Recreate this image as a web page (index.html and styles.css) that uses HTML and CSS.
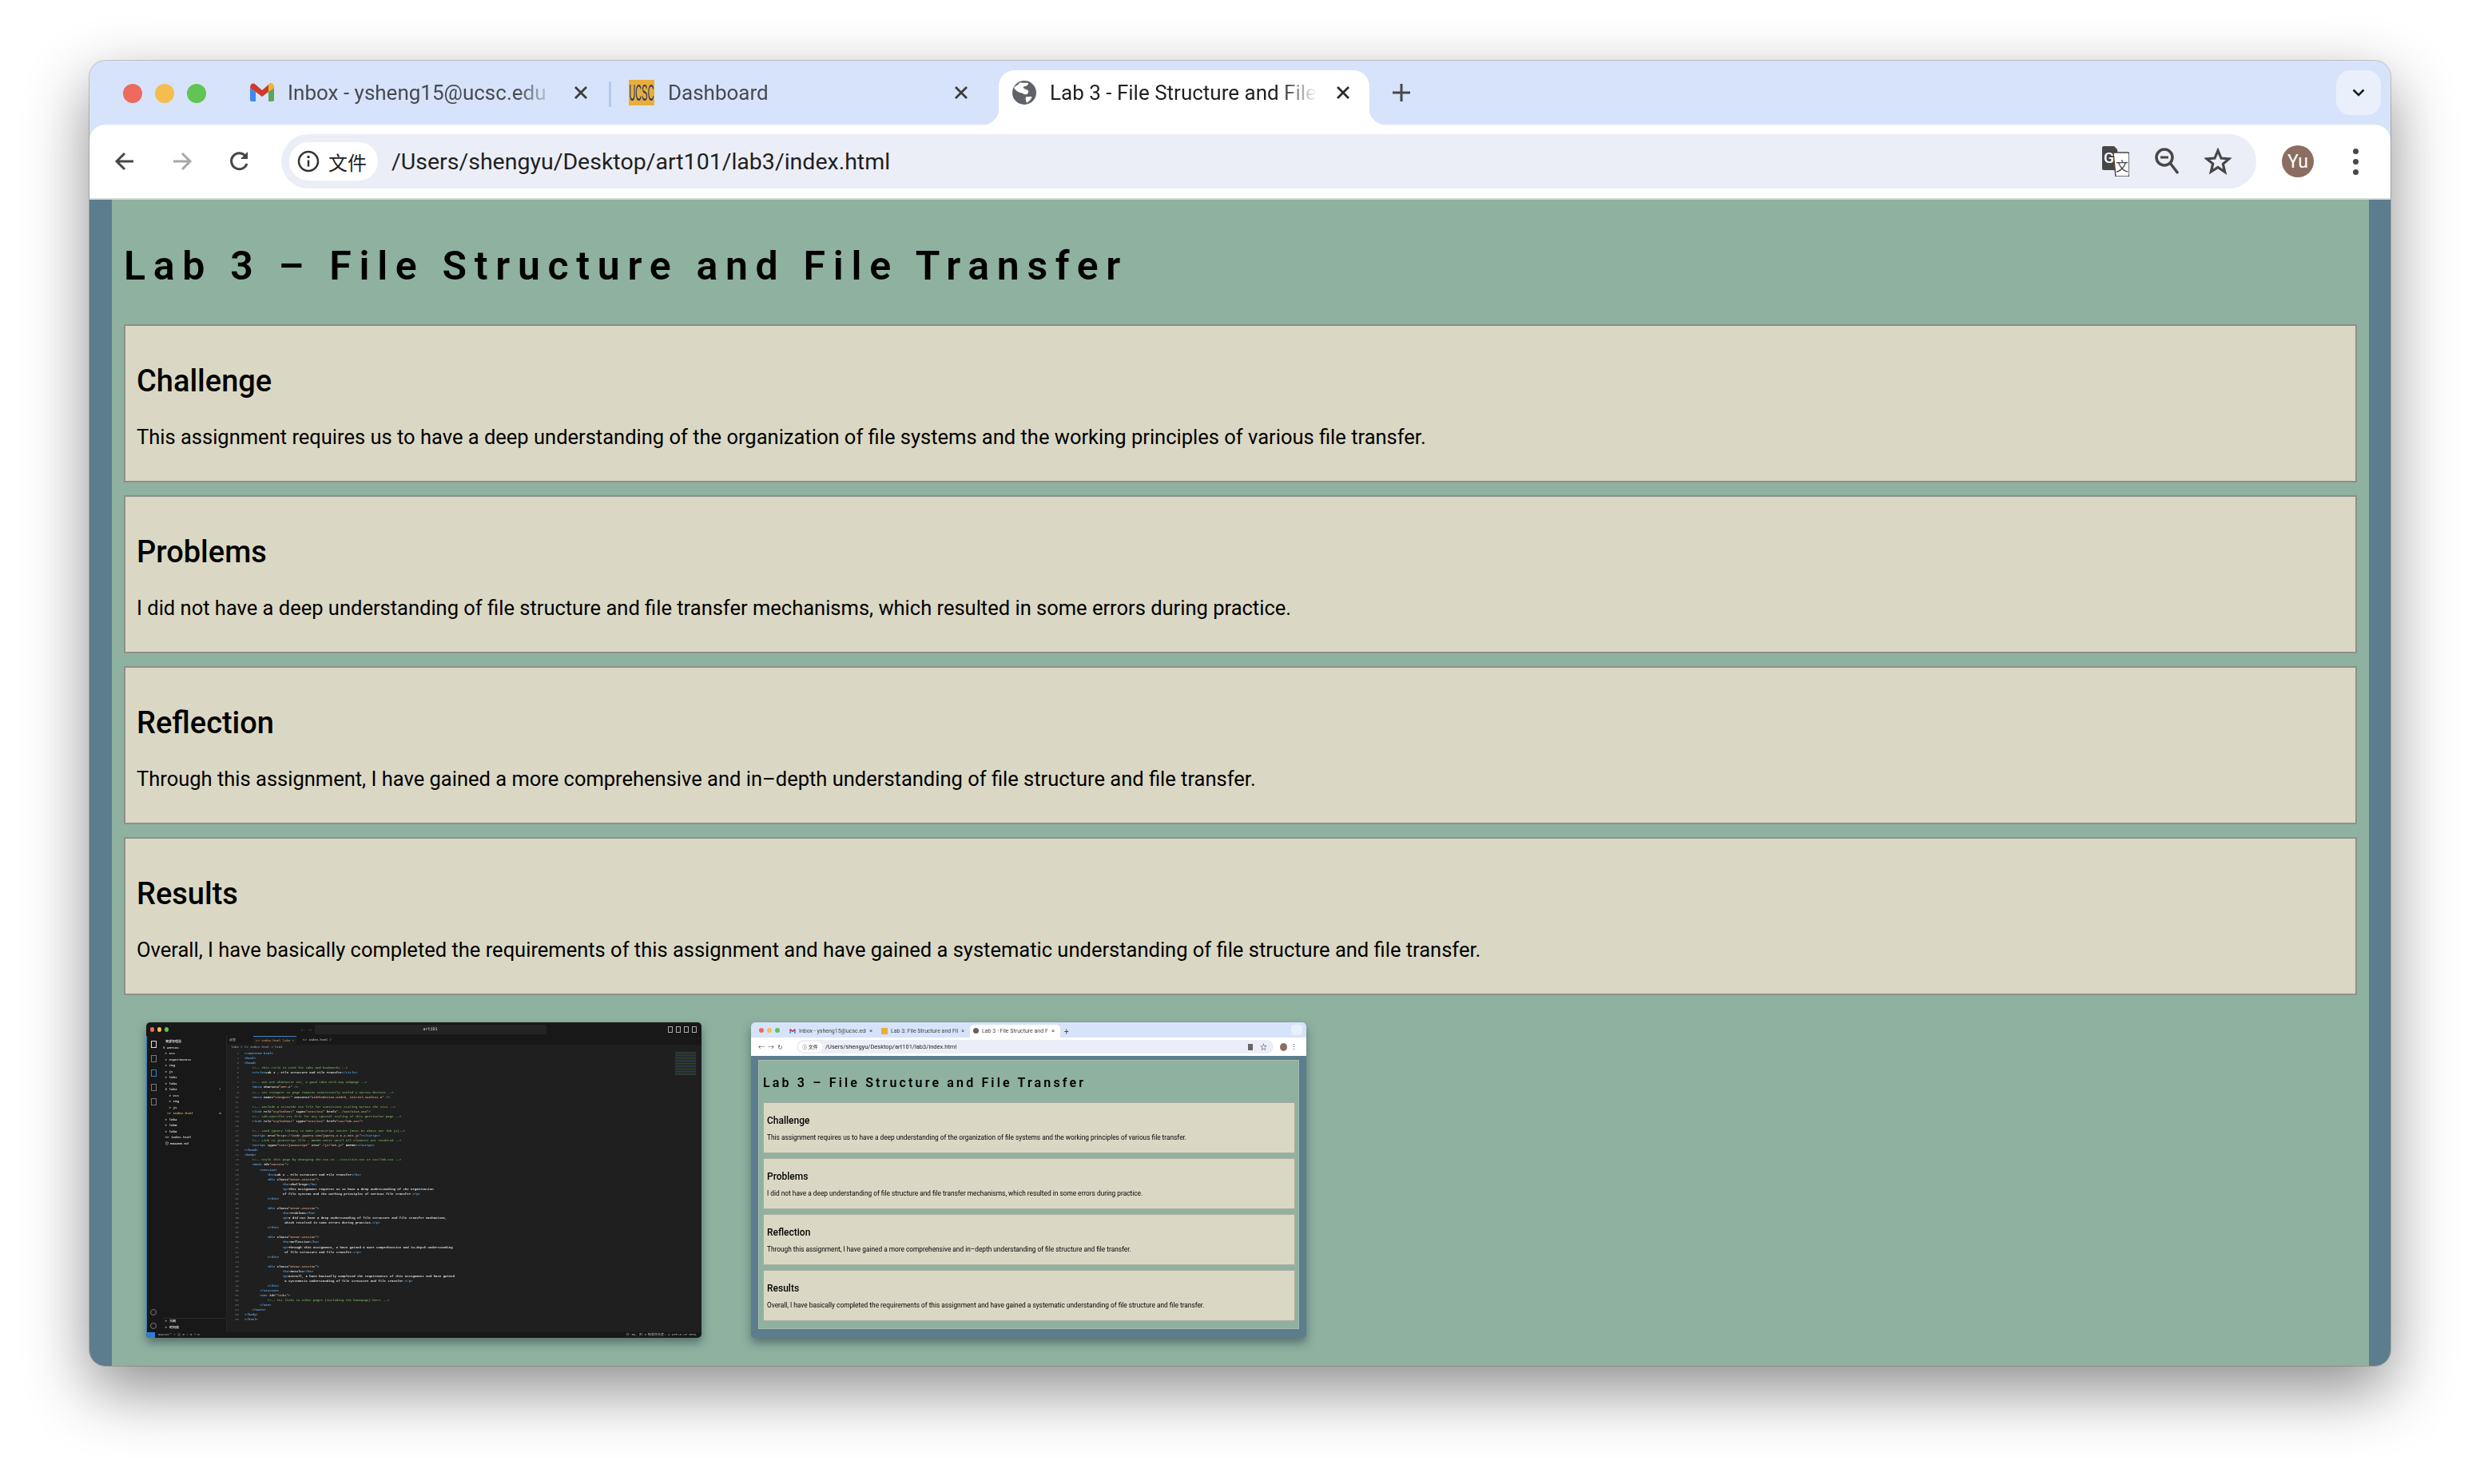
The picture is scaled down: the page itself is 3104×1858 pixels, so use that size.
FILE: index.html
```html
<!DOCTYPE html>
<html lang="en">
<head>
    <meta charset="UTF-8">
    <meta name="viewport" content="width=device-width, initial-scale=1.0">
    <title>Lab 3 - File Structure and File Transfer</title>
    <link rel="stylesheet" href="styles.css">
</head>
<body>

<div class="window">
    <!-- tab strip -->
    <div class="tabstrip">
        <div class="lights">
            <span class="light red"></span>
            <span class="light yellow"></span>
            <span class="light green"></span>
        </div>
        <div class="tab">
            <svg class="favicon gmail" viewBox="0 0 30 24">
                <path d="M0 6v15a2 2 0 0 0 2 2h5V11z" fill="#4285f4"/>
                <path d="M30 6v15a2 2 0 0 1-2 2h-5V11z" fill="#5aa65f"/>
                <path d="M0 6c0-5 4-7 7-4l8 7 8-7c3-3 7-1 7 4l-7 5-8 6-8-6z" fill="#d0392c"/>
                <path d="M23 2c3-3 7-1 7 4l-7 5z" fill="#f1b82d"/>
            </svg>
            <span class="tab-title">Inbox - ysheng15@ucsc.edu</span>
            <svg class="tab-close" viewBox="0 0 18 18"><path d="M2 2l14 14M16 2 2 16" stroke="#3c3c3c" stroke-width="2.800" fill="none"/></svg>
        </div>
        <span class="tab-sep"></span>
        <div class="tab">
            <div class="favicon ucsc"><span>UCSC</span></div>
            <span class="tab-title">Dashboard</span>
            <svg class="tab-close" viewBox="0 0 18 18"><path d="M2 2l14 14M16 2 2 16" stroke="#3c3c3c" stroke-width="2.800" fill="none"/></svg>
        </div>
        <div class="tab active">
            <svg class="favicon" viewBox="0 0 28 28">
                <circle cx="14" cy="14" r="14" fill="#5f6368"/>
                <path d="M9 2c4 1 8 0 10 1-1 3-4 4-6 4-1 2 3 3 5 4 2 2 0 4-1 5-3 1-5-2-8-2-3-1-6-3-7-6 2-2 5-3 7-6zM16 19c2 0 5-1 7 0-1 3-4 6-6 7-1-2-2-5-1-7z" fill="#fff"/>
            </svg>
            <span class="tab-title">Lab 3 - File Structure and File Transfer</span>
            <svg class="tab-close" viewBox="0 0 18 18"><path d="M2 2l14 14M16 2 2 16" stroke="#2a2a2a" stroke-width="2.800" fill="none"/></svg>
        </div>
        <svg class="new-tab" viewBox="0 0 22 22"><path d="M11 0v22M0 11h22" stroke="#474747" stroke-width="3" fill="none"/></svg>
        <div class="tab-search">
            <svg viewBox="0 0 16 10" width="16" height="10"><path d="M1.5 1.5 8 8l6.500-6.500" fill="none" stroke="#1f1f1f" stroke-width="2.500"/></svg>
        </div>
    </div>

    <!-- toolbar -->
    <div class="toolbar">
        <svg class="nav" viewBox="0 0 28 28"><path d="M25 14H5M14 4 4 14l10 10" fill="none" stroke="#474747" stroke-width="3"/></svg>
        <svg class="nav" viewBox="0 0 28 28"><path d="M3 14h20M14 4l10 10-10 10" fill="none" stroke="#a8a8a8" stroke-width="3"/></svg>
        <svg class="nav" viewBox="0 0 28 28"><path d="M23 17a10 10 0 1 1-2-10" fill="none" stroke="#474747" stroke-width="3"/><path d="M24 2v9h-9z" fill="#474747"/></svg>
        <div class="omnibox">
            <div class="chip">
                <svg viewBox="0 0 28 28" width="28" height="28"><circle cx="14" cy="14" r="12" fill="none" stroke="#333" stroke-width="2.500"/><path d="M14 12.500v8" stroke="#333" stroke-width="2.500"/><circle cx="14" cy="8.500" r="1.700" fill="#333"/></svg>
                <span>文件</span>
            </div>
            <span class="url">/Users/shengyu/Desktop/art101/lab3/index.html</span>
            <svg class="omni-icon first" viewBox="0 0 34 38" width="34" height="38">
                <path d="M2 0h13l4 4 3 26H2a2 2 0 0 1-2-2V2a2 2 0 0 1 2-2z" fill="#474747"/>
                <path d="M14 8h18a2 2 0 0 1 2 2v26a2 2 0 0 1-2 2H17z" fill="#fff" stroke="#474747" stroke-width="1.500"/>
                <text x="2" y="21" class="glyph-g">G</text>
                <text x="17" y="31" class="glyph-wen">文</text>
            </svg>
            <svg class="omni-icon" viewBox="0 0 30 34" width="30" height="34">
                <circle cx="12" cy="12" r="10" fill="none" stroke="#474747" stroke-width="3.500"/>
                <path d="M7 12h10" stroke="#474747" stroke-width="3"/>
                <path d="M19 19l10 13" stroke="#474747" stroke-width="3.500"/>
            </svg>
            <svg class="omni-icon" viewBox="0 0 34 34" width="34" height="34">
                <path d="M17 3.500l4 9.500 10 .8-7.700 6.500 2.400 10L17 24.500 8.300 30l2.400-10L3 13.800l10-.8z" fill="none" stroke="#474747" stroke-width="3.200"/>
            </svg>
        </div>
        <div class="avatar">Yu</div>
        <div class="menu-dots"><span></span><span></span><span></span></div>
    </div>

    <!-- page -->
    <main class="page">
        <h1>Lab 3 – File Structure and File Transfer</h1>
        <div class="minor-section">
            <h2>Challenge</h2>
            <p>This assignment requires us to have a deep understanding of the organization of file systems and the working principles of various file transfer.</p>
        </div>
        <div class="minor-section">
            <h2>Problems</h2>
            <p>I did not have a deep understanding of file structure and file transfer mechanisms, which resulted in some errors during practice.</p>
        </div>
        <div class="minor-section">
            <h2>Reflection</h2>
            <p>Through this assignment, I have gained a more comprehensive and in–depth understanding of file structure and file transfer.</p>
        </div>
        <div class="minor-section">
            <h2>Results</h2>
            <p>Overall, I have basically completed the requirements of this assignment and have gained a systematic understanding of file structure and file transfer.</p>
        </div>

        <div class="shots">
            <!-- editor screenshot -->
            <div class="shot editor">
                <div class="ed-title">
                    <div class="ed-lights"><i class="red"></i><i class="yellow"></i><i class="green"></i></div>
                    <span class="ed-arrows">← →</span>
                    <div class="ed-search">art101</div>
                    <div class="ed-panels"><i></i><i></i><i></i><i></i></div>
                </div>
                <div class="ed-body">
                    <div class="ed-activity">
                        <i class="on"></i><i></i><i class="badge"></i><i></i><i></i>
                        <span class="ed-spacer"></span>
                        <i class="round"></i><i class="round"></i>
                    </div>
                    <div class="ed-side">
                        <div class="ed-side-top">
<pre> 资源管理器
∨ ART101
 &gt; css
 &gt; experiments
 &gt; img
 &gt; js
 &gt; lab1
 &gt; lab2
 ∨ lab3                     •
   &gt; css
   &gt; img
   &gt; js
  <b>&lt;&gt; index.html             M</b>
 &gt; lab4
 &gt; lab5
 &gt; lab6
 &lt;&gt; index.html
 ⓘ README.md</pre>
                        </div>
                        <div class="ed-side-bottom">
<pre> &gt; 大纲
 &gt; 时间线</pre>
                        </div>
                    </div>
                    <div class="ed-main">
                        <div class="ed-tabs">
                            <span>欢迎</span>
                            <span class="on">&lt;&gt; index.html  lab3 ×</span>
                            <span>&lt;&gt; index.html  /</span>
                        </div>
                        <div class="ed-crumbs">lab3 &gt; &lt;&gt; index.html &gt; html</div>
                        <div class="ed-code">
<pre class="ed-nums">1
2
3
4
5
6
7
8
9
10
11
12
13
14
15
16
17
18
19
20
21
22
23
24
25
26
27
28
29
30
31
32
33
34
35
36
37
38
39
40
41
42
43
44
45
46
47
48
49
50
51
52
53
54
55
56</pre>
<pre class="ed-src"><u>&lt;!DOCTYPE html&gt;</u>
<u>&lt;html&gt;</u>
<u>&lt;head&gt;</u>
    <s>&lt;!-- This title is used for tabs and bookmarks --&gt;</s>
    <u>&lt;title&gt;</u>Lab 3 - File Structure and File Transfer<u>&lt;/title&gt;</u>

    <s>&lt;!-- Use UTF character set, a good idea with any webpage --&gt;</s>
    <u>&lt;meta</u> charset=<q>"UTF-8"</q> <u>/&gt;</u>
    <s>&lt;!-- Set viewport so page remains consistently scaled w narrow devices --&gt;</s>
    <u>&lt;meta</u> name=<q>"viewport"</q> content=<q>"width=device-width, initial-scale=1.0"</q> <u>/&gt;</u>

    <s>&lt;!-- Include a sitewide CSS file for consistent styling across the site --&gt;</s>
    <u>&lt;link</u> rel=<q>"stylesheet"</q> type=<q>"text/css"</q> href=<q>"../css/site.css"</q><u>&gt;</u>
    <s>&lt;!-- Lab-specific CSS file for any special styling of this particular page --&gt;</s>
    <u>&lt;link</u> rel=<q>"stylesheet"</q> type=<q>"text/css"</q> href=<q>"css/lab.css"</q><u>&gt;</u>

    <s>&lt;!-- Load jQuery library to make javascript easier (must be above our lab js)--&gt;</s>
    <u>&lt;script</u> src=<q>"https://code.jquery.com/jquery-3.6.4.min.js"</q><u>&gt;&lt;/script&gt;</u>
    <s>&lt;!-- Link to javascript file - DEFER waits until all elements are rendered --&gt;</s>
    <u>&lt;script</u> type=<q>"text/javascript"</q> src=<q>"./js/lab.js"</q> DEFER<u>&gt;&lt;/script&gt;</u>
<u>&lt;/head&gt;</u>
<u>&lt;body&gt;</u>
    <s>&lt;!-- Style this page by changing the CSS in ../css/site.css or css/lab.css --&gt;</s>
    <u>&lt;main</u> id=<q>"content"</q><u>&gt;</u>
        <u>&lt;section&gt;</u>
            <u>&lt;h1&gt;</u>Lab 3 - File Structure and File Transfer<u>&lt;/h1&gt;</u>
            <u>&lt;div</u> class=<q>"minor-section"</q><u>&gt;</u>
                    <u>&lt;h2&gt;</u>Challenge<u>&lt;/h2&gt;</u>
                    <u>&lt;p&gt;</u>This assignment requires us to have a deep understanding of the organization
                    of file systems and the working principles of various file transfer.<u>&lt;/p&gt;</u>
            <u>&lt;/div&gt;</u>

            <u>&lt;div</u> class=<q>"minor-section"</q><u>&gt;</u>
                    <u>&lt;h2&gt;</u>Problems<u>&lt;/h2&gt;</u>
                    <u>&lt;p&gt;</u>I did not have a deep understanding of file structure and file transfer mechanisms,
                     which resulted in some errors during practice.<u>&lt;/p&gt;</u>
            <u>&lt;/div&gt;</u>

            <u>&lt;div</u> class=<q>"minor-section"</q><u>&gt;</u>
                    <u>&lt;h2&gt;</u>Reflection<u>&lt;/h2&gt;</u>
                    <u>&lt;p&gt;</u>Through this assignment, I have gained a more comprehensive and in-depth understanding
                     of file structure and file transfer.<u>&lt;/p&gt;</u>
            <u>&lt;/div&gt;</u>

            <u>&lt;div</u> class=<q>"minor-section"</q><u>&gt;</u>
                    <u>&lt;h2&gt;</u>Results<u>&lt;/h2&gt;</u>
                    <u>&lt;p&gt;</u>Overall, I have basically completed the requirements of this assignment and have gained
                     a systematic understanding of file structure and file transfer.<u>&lt;/p&gt;</u>
            <u>&lt;/div&gt;</u>
        <u>&lt;/section&gt;</u>
        <u>&lt;nav</u> id=<q>"links"</q><u>&gt;</u>
            <s>&lt;!-- Put links to other pages (including the homepage) here. --&gt;</s>
        <u>&lt;/nav&gt;</u>
    <u>&lt;/main&gt;</u>
<u>&lt;/body&gt;</u>
<u>&lt;/html&gt;</u></pre>
                            <div class="ed-minimap"></div>
                        </div>
                    </div>
                </div>
                <div class="ed-status">
                    <b></b>
                    <span>master*  ○  ⓧ 0 ⚠ 0   ⑂ 0</span>
                    <span class="ed-status-right">行 56, 列 8  制表符长度: 4  UTF-8  LF  HTML</span>
                </div>
            </div>

            <!-- browser screenshot -->
            <div class="shot mini">
                <div class="mini-tabs">
                    <div class="mini-lights"><i class="red"></i><i class="yellow"></i><i class="green"></i></div>
                    <div class="mini-tab">
                        <svg class="mini-fav" viewBox="0 0 30 24"><path d="M0 6v17h7V11zM30 6v17h-7V11z" fill="#4285f4"/><path d="M0 6c0-5 4-7 7-4l8 7 8-7c3-3 7-1 7 4l-15 11z" fill="#d0392c"/></svg>
                        <span>Inbox - ysheng15@ucsc.edu</span><em>×</em>
                    </div>
                    <div class="mini-tab">
                        <b class="mini-ucsc"></b>
                        <span>Lab 3: File Structure and File</span><em>×</em>
                    </div>
                    <div class="mini-tab on">
                        <b class="mini-globe"></b>
                        <span>Lab 3 - File Structure and File</span><em>×</em>
                    </div>
                    <em class="mini-plus">+</em>
                    <b class="mini-chevron"></b>
                </div>
                <div class="mini-bar">
                    <span class="mini-nav">← &nbsp;→ &nbsp;↻</span>
                    <div class="mini-omni">
                        <span class="mini-chip">ⓘ 文件</span>
                        <span class="mini-url">/Users/shengyu/Desktop/art101/lab3/index.html</span>
                        <b class="mini-tool"></b>
                        <span class="mini-star">☆</span>
                    </div>
                    <span class="mini-avatar"></span>
                    <span class="mini-dots">⋮</span>
                </div>
                <div class="mini-page">
                    <div class="mini-inner">
                        <div class="mini-h1">Lab 3 – File Structure and File Transfer</div>
                        <div class="mini-card">
                            <div class="mini-h2">Challenge</div>
                            <div class="mini-p">This assignment requires us to have a deep understanding of the organization of file systems and the working principles of various file transfer.</div>
                        </div>
                        <div class="mini-card">
                            <div class="mini-h2">Problems</div>
                            <div class="mini-p">I did not have a deep understanding of file structure and file transfer mechanisms, which resulted in some errors during practice.</div>
                        </div>
                        <div class="mini-card">
                            <div class="mini-h2">Reflection</div>
                            <div class="mini-p">Through this assignment, I have gained a more comprehensive and in–depth understanding of file structure and file transfer.</div>
                        </div>
                        <div class="mini-card">
                            <div class="mini-h2">Results</div>
                            <div class="mini-p">Overall, I have basically completed the requirements of this assignment and have gained a systematic understanding of file structure and file transfer.</div>
                        </div>
                    </div>
                </div>
            </div>
        </div>
    </main>
</div>

</body>
</html>
```

FILE: styles.css
```css
body {
    margin: 0;
    height: 1858px;
    padding: 76px 112px 0;
    box-sizing: border-box;
    overflow: hidden;
    background: #fff;
    font-family: Roboto, "Noto Sans CJK SC", sans-serif;
}

/* window */
.window {
    height: 1634px;
    border-radius: 20px;
    overflow: hidden;
    background: #d6e3fa;
    display: flex;
    flex-direction: column;
    box-shadow: 0 0 0 1px rgba(0, 0, 0, 0.18), 0 30px 80px rgba(0, 0, 0, 0.45);
}
.tabstrip {
    height: 80px;
    flex: none;
    display: flex;
    align-items: flex-end;
}
.lights {
    width: 184px;
    box-sizing: border-box;
    height: 68px;
    padding: 17px 0 0 42px;
    display: flex;
    gap: 16px;
}
.light {
    width: 24px;
    height: 24px;
    border-radius: 50%;
}
.red { background: #ee6a5f; }
.yellow { background: #f5bd4f; }
.green { background: #61c454; }

.tab {
    width: 464px;
    height: 68px;
    box-sizing: border-box;
    padding: 0 0 12px 17px;
    display: flex;
    align-items: center;
    position: relative;
    border-radius: 20px 20px 0 0;
}
.tab.active {
    background: #fff;
    margin-left: 16px;
}
.tab.active::before,
.tab.active::after {
    content: "";
    position: absolute;
    bottom: 0;
    width: 20px;
    height: 20px;
}
.tab.active::before {
    left: -20px;
    background: radial-gradient(circle at 0 0, transparent 20px, #fff 20.5px);
}
.tab.active::after {
    right: -20px;
    background: radial-gradient(circle at 100% 0, transparent 20px, #fff 20.5px);
}
.favicon {
    width: 30px;
    height: 30px;
    flex: none;
}
.gmail { height: 24px; }
.ucsc {
    width: 32px;
    height: 32px;
    background: #e8ad3c;
    overflow: hidden;
    display: flex;
    align-items: center;
    justify-content: center;
}
.ucsc span {
    font-family: "Liberation Sans", sans-serif;
    font-size: 11px;
    color: #2a3560;
    transform: scaleY(2.6);
}
.tab-title {
    margin-left: 17px;
    width: 334px;
    overflow: hidden;
    white-space: nowrap;
    font-size: 26px;
    color: #474a50;
    -webkit-mask-image: linear-gradient(to right, #000 86%, transparent 100%);
    mask-image: linear-gradient(to right, #000 86%, transparent 100%);
}
.tab.active .tab-title { color: #1f1f1f; }
.tab-close {
    width: 18px;
    height: 18px;
    margin-left: 24px;
    flex: none;
}
.tab-sep {
    width: 3px;
    height: 32px;
    margin: 0 5px 22px 2px;
    background: #b4c9f0;
    flex: none;
}
.new-tab {
    width: 22px;
    height: 22px;
    margin: 0 0 29px 29px;
    flex: none;
}
.tab-search {
    margin: 0 12px 12px auto;
    width: 56px;
    height: 56px;
    border-radius: 18px;
    background: #e9f0fc;
    display: flex;
    align-items: center;
    justify-content: center;
}

/* toolbar */
.toolbar {
    height: 94px;
    flex: none;
    box-sizing: border-box;
    background: #fff;
    border-bottom: 2px solid #d5dcd8;
    border-radius: 20px 20px 0 0;
    display: flex;
    align-items: center;
    padding-left: 30px;
}
.nav {
    width: 28px;
    height: 28px;
    margin-right: 44px;
    flex: none;
}
.omnibox {
    width: 2472px;
    height: 68px;
    margin-left: -6px;
    box-sizing: border-box;
    padding: 0 31px 0 10px;
    border-radius: 34px;
    background: #ebeef7;
    display: flex;
    align-items: center;
}
.chip {
    width: 111px;
    height: 48px;
    box-sizing: border-box;
    padding-left: 10px;
    border-radius: 24px;
    background: #fff;
    display: flex;
    align-items: center;
    gap: 11px;
    font-size: 24px;
    color: #1f1f1f;
}
.url {
    margin-left: 17px;
    font-size: 28.500px;
    color: #1f1f1f;
}
.omni-icon { margin-left: 32px; }
.omni-icon.first { margin-left: auto; }
.glyph-g {
    font-size: 19px;
    font-weight: 500;
    fill: #fff;
}
.glyph-wen {
    font-size: 16px;
    fill: #474747;
}
.avatar {
    width: 40px;
    height: 40px;
    margin-left: 32px;
    border-radius: 50%;
    background: #8b6d62;
    color: #fff;
    font-size: 23px;
    display: flex;
    align-items: center;
    justify-content: center;
    flex: none;
}
.menu-dots {
    margin-left: 49px;
    display: flex;
    flex-direction: column;
    gap: 6px;
}
.menu-dots span {
    width: 7px;
    height: 7px;
    border-radius: 50%;
    background: #474747;
}

/* page */
.page {
    flex: 1;
    background: #8fb1a0;
    border-left: 28px solid #5b7d8d;
    border-right: 27px solid #5b7d8d;
    padding: 0 15px;
    overflow: hidden;
}
h1 {
    margin: 54px 0 44px;
    font-size: 50px;
    line-height: 58px;
    font-weight: 600;
    letter-spacing: 9.700px;
    color: #000;
}
.minor-section {
    height: 198px;
    box-sizing: border-box;
    margin-bottom: 16px;
    padding: 47px 14px 0;
    background: #dad8c4;
    border: 2px solid #8c9088;
}
h2 {
    margin: 0 0 32px;
    font-size: 38px;
    line-height: 44px;
    font-weight: 500;
    color: #000;
}
.minor-section p {
    margin: 0;
    font-size: 25.500px;
    line-height: 32px;
    color: #000;
}

/* screenshots under the cards */
.shots {
    display: flex;
    gap: 62px;
    padding: 18px 0 0 28px;
}
.shot {
    width: 695px;
    height: 395px;
    overflow: hidden;
    flex: none;
    border-radius: 5px;
    filter: blur(0.35px);
    box-shadow: 0 6px 12px rgba(40, 60, 70, 0.55);
}

/* editor screenshot */
.editor {
    background: #181818;
    color: #cfcfcf;
    display: flex;
    flex-direction: column;
    font-family: "Liberation Mono", monospace;
    font-size: 4px;
}
.editor pre {
    margin: 0;
    font: inherit;
}
.ed-title {
    height: 17px;
    flex: none;
    display: flex;
    align-items: center;
    padding: 0 6px 0 5px;
}
.ed-lights {
    display: flex;
    gap: 4px;
}
.ed-lights i {
    width: 5px;
    height: 6px;
    border-radius: 50%;
}
.ed-arrows {
    margin-left: 166px;
    font-size: 7px;
    color: #777;
}
.ed-search {
    margin-left: 4px;
    width: 290px;
    height: 12px;
    border-radius: 2px;
    background: #242424;
    font-size: 5px;
    line-height: 12px;
    text-align: center;
}
.ed-panels {
    margin-left: auto;
    display: flex;
    gap: 4px;
}
.ed-panels i {
    width: 6px;
    height: 8px;
    border: 1px solid #aaa;
    box-sizing: border-box;
}
.ed-body {
    flex: 1;
    display: flex;
    min-height: 0;
}
.ed-activity {
    width: 17px;
    flex: none;
    display: flex;
    flex-direction: column;
    align-items: center;
    gap: 9px;
    padding: 6px 0 4px;
    box-sizing: border-box;
    border-left: 1px solid #3b7fc4;
}
.ed-activity i {
    width: 7px;
    height: 9px;
    border: 1px solid #777;
    box-sizing: border-box;
}
.ed-activity i.on { border-color: #ddd; }
.ed-activity i.badge { border-color: #3b7fc4; }
.ed-activity i.round {
    height: 8px;
    width: 8px;
    border-radius: 50%;
}
.ed-spacer { flex: 1; }
.ed-side {
    width: 84px;
    flex: none;
    display: flex;
    flex-direction: column;
    justify-content: space-between;
    line-height: 7.500px;
    font-size: 4.200px;
    font-weight: bold;
    border-right: 1px solid #262626;
    box-sizing: border-box;
    padding: 4px 0 2px 4px;
}
.ed-side b {
    font-weight: bold;
    color: #d9a05b;
}
.ed-side-bottom { border-top: 1px solid #2b2b2b; }
.ed-main {
    flex: 1;
    min-width: 0;
    background: #1f1f1f;
    display: flex;
    flex-direction: column;
}
.ed-tabs {
    height: 11px;
    background: #181818;
    display: flex;
    gap: 8px;
    line-height: 11px;
    padding-left: 3px;
    flex: none;
}
.ed-tabs .on {
    margin-left: 14px;
    background: #1f1f1f;
    border-top: 1px solid #3b7fc4;
    color: #d9a05b;
    padding: 0 3px;
    line-height: 10px;
}
.ed-crumbs {
    height: 7px;
    line-height: 7px;
    padding-left: 5px;
    flex: none;
    color: #aaa;
}
.ed-code {
    flex: 1;
    display: flex;
    line-height: 6.070px;
    padding-top: 1px;
    position: relative;
}
.ed-nums {
    width: 15px;
    text-align: right;
    color: #6e7681;
    flex: none;
}
.ed-src {
    margin-left: 7px !important;
    color: #dcdcdc;
    font-weight: bold !important;
    font-size: 3.990px !important;
}
.ed-src u {
    text-decoration: none;
    color: #5b9fd6;
}
.ed-src s {
    text-decoration: none;
    color: #6a9a55;
}
.ed-src q {
    quotes: none;
    color: #d09a7a;
}
.ed-minimap {
    position: absolute;
    top: 2px;
    right: 7px;
    width: 26px;
    height: 30px;
    opacity: 0.35;
    background: repeating-linear-gradient(#5f8f4e 0 1px, #1f1f1f 1px 2px, #4f8fc4 2px 3px, #1f1f1f 3px 4px);
}
.ed-status {
    height: 7px;
    flex: none;
    display: flex;
    align-items: center;
    line-height: 7px;
    gap: 4px;
    color: #bbb;
}
.ed-status b {
    width: 11px;
    height: 7px;
    background: #2f7fd8;
}
.ed-status-right {
    margin-left: auto;
    margin-right: 6px;
}

/* browser screenshot */
.mini {
    background: #5b7d8d;
    display: flex;
    flex-direction: column;
    color: #333;
}
.mini em {
    font-style: normal;
}
.mini-tabs {
    height: 19px;
    flex: none;
    background: #d6e3fa;
    display: flex;
    align-items: flex-end;
    font-size: 7px;
    color: #444;
    white-space: nowrap;
}
.mini-lights {
    width: 44px;
    height: 16px;
    flex: none;
    box-sizing: border-box;
    padding: 4px 0 0 10px;
    display: flex;
    gap: 4px;
}
.mini-lights i {
    width: 6px;
    height: 6px;
    border-radius: 50%;
}
.mini-tab {
    width: 115px;
    height: 16px;
    box-sizing: border-box;
    padding: 0 7px 1px 4px;
    display: flex;
    align-items: center;
    gap: 4px;
}
.mini-tab span {
    flex: 1;
    overflow: hidden;
}
.mini-tab.on {
    width: 113px;
    background: #fff;
    border-radius: 5px 5px 0 0;
}
.mini-fav {
    width: 8px;
    height: 6px;
    flex: none;
}
.mini-ucsc {
    width: 8px;
    height: 8px;
    background: #e8ad3c;
    flex: none;
}
.mini-globe {
    width: 7px;
    height: 7px;
    border-radius: 50%;
    background: #5f6368;
    flex: none;
}
.mini-plus {
    margin: 0 0 2px 5px;
    font-size: 10px;
}
.mini-chevron {
    width: 14px;
    height: 13px;
    margin: 0 5px 3px auto;
    border-radius: 4px;
    background: #e9f0fc;
}
.mini-bar {
    height: 23px;
    flex: none;
    box-sizing: border-box;
    background: #fff;
    display: flex;
    align-items: center;
    padding: 0 9px;
}
.mini-nav {
    width: 48px;
    font-size: 8px;
    color: #555;
}
.mini-omni {
    width: 597px;
    height: 17px;
    box-sizing: border-box;
    padding: 0 8px 0 2px;
    border-radius: 9px;
    background: #ebeef7;
    display: flex;
    align-items: center;
    font-size: 7.500px;
    color: #222;
}
.mini-chip {
    width: 30px;
    height: 13px;
    line-height: 13px;
    text-align: center;
    border-radius: 7px;
    background: #fff;
    font-size: 6px;
}
.mini-url { margin-left: 4px; }
.mini-tool {
    width: 6px;
    height: 8px;
    margin-left: auto;
    background: #666;
}
.mini-star {
    margin-left: 9px;
    font-size: 9px;
}
.mini-avatar {
    width: 9px;
    height: 10px;
    margin-left: 8px;
    border-radius: 50%;
    background: #8b6d62;
    flex: none;
}
.mini-dots {
    margin-left: 4px;
    font-size: 9px;
}
.mini-page {
    flex: 1;
    padding: 5px 9px 0;
}
.mini-inner {
    height: 337px;
    box-sizing: border-box;
    background: #8fb1a0;
    border: 1px solid #a9b9ae;
    padding: 18px 4px 0 5px;
    color: #000;
}
.mini-h1 {
    font-size: 16px;
    line-height: 20px;
    font-weight: 600;
    letter-spacing: 3.150px;
    margin-bottom: 14px;
}
.mini-card {
    height: 64px;
    box-sizing: border-box;
    margin-bottom: 6px;
    padding: 15px 4px 0;
    background: #dad8c4;
    border: 1px solid #a9ad9f;
}
.mini-h2 {
    font-size: 12px;
    line-height: 14px;
    font-weight: 500;
    margin-bottom: 9px;
}
.mini-p {
    font-size: 8.300px;
    line-height: 10px;
    white-space: nowrap;
}
```
